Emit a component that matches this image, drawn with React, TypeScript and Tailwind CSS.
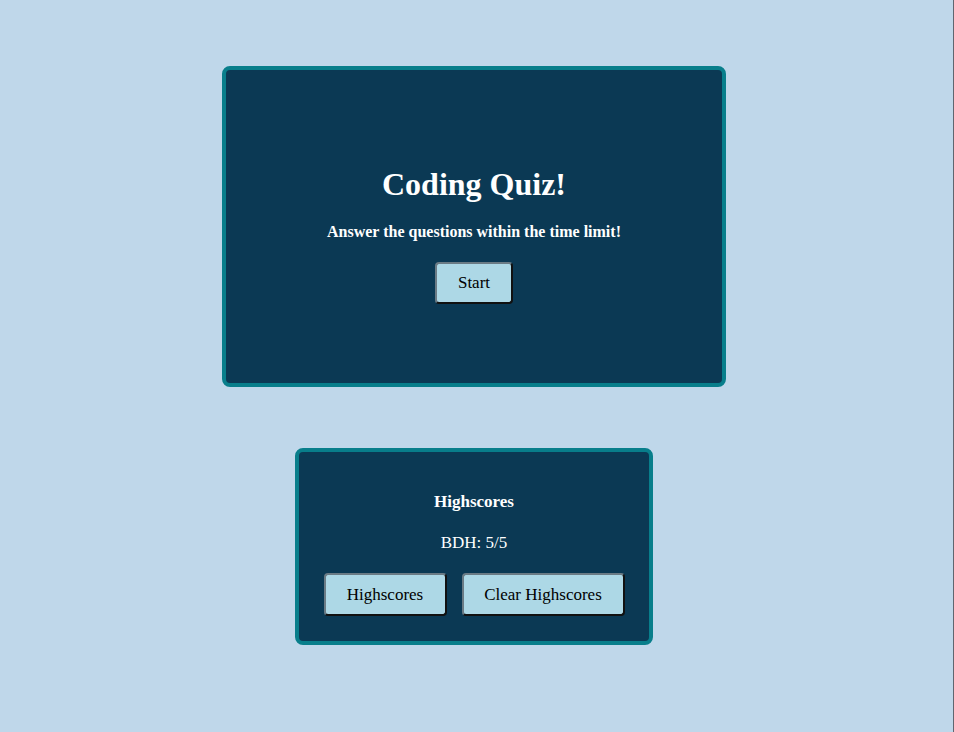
export default function App() {
  const btn =
    "bg-[#add8e6] text-black text-[17px] rounded-[4px] border-2 border-t-[#6b7b85] border-l-[#6b7b85] border-b-[#111] border-r-[#111]"

  return (
    <div className="min-h-screen w-full bg-[#bfd7ea] border-r border-[#5f6670] font-['Liberation_Serif',serif]">
      <div className="flex flex-col items-center pr-[5px] pt-[66px]">
        <div className="w-[504px] h-[321px] rounded-[8px] border-4 border-[#087e8b] bg-[#0b3954] flex flex-col items-center pt-[98px] text-white">
          <h1 className="text-[32px] font-bold leading-none">Coding Quiz!</h1>
          <h3 className="mt-[20px] text-[16px] leading-[24px] font-bold">Answer the questions within the time limit!</h3>
          <button className={btn + " mt-[18px] w-[78px] h-[42px]"}>Start</button>
        </div>

        <div className="mt-[61px] w-[358px] h-[197px] rounded-[8px] border-4 border-[#087e8b] bg-[#0b3954] flex flex-col items-center pt-[37px] text-white">
          <h4 className="text-[17px] leading-[26px] font-bold">Highscores</h4>
          <p className="mt-[15px] text-[17px] leading-[26px]">BDH: 5/5</p>
          <div className="mt-[17px] flex gap-[15px]">
            <button className={btn + " w-[123px] h-[43px]"}>Highscores</button>
            <button className={btn + " w-[163px] h-[43px]"}>Clear Highscores</button>
          </div>
        </div>
      </div>
    </div>
  )
}
